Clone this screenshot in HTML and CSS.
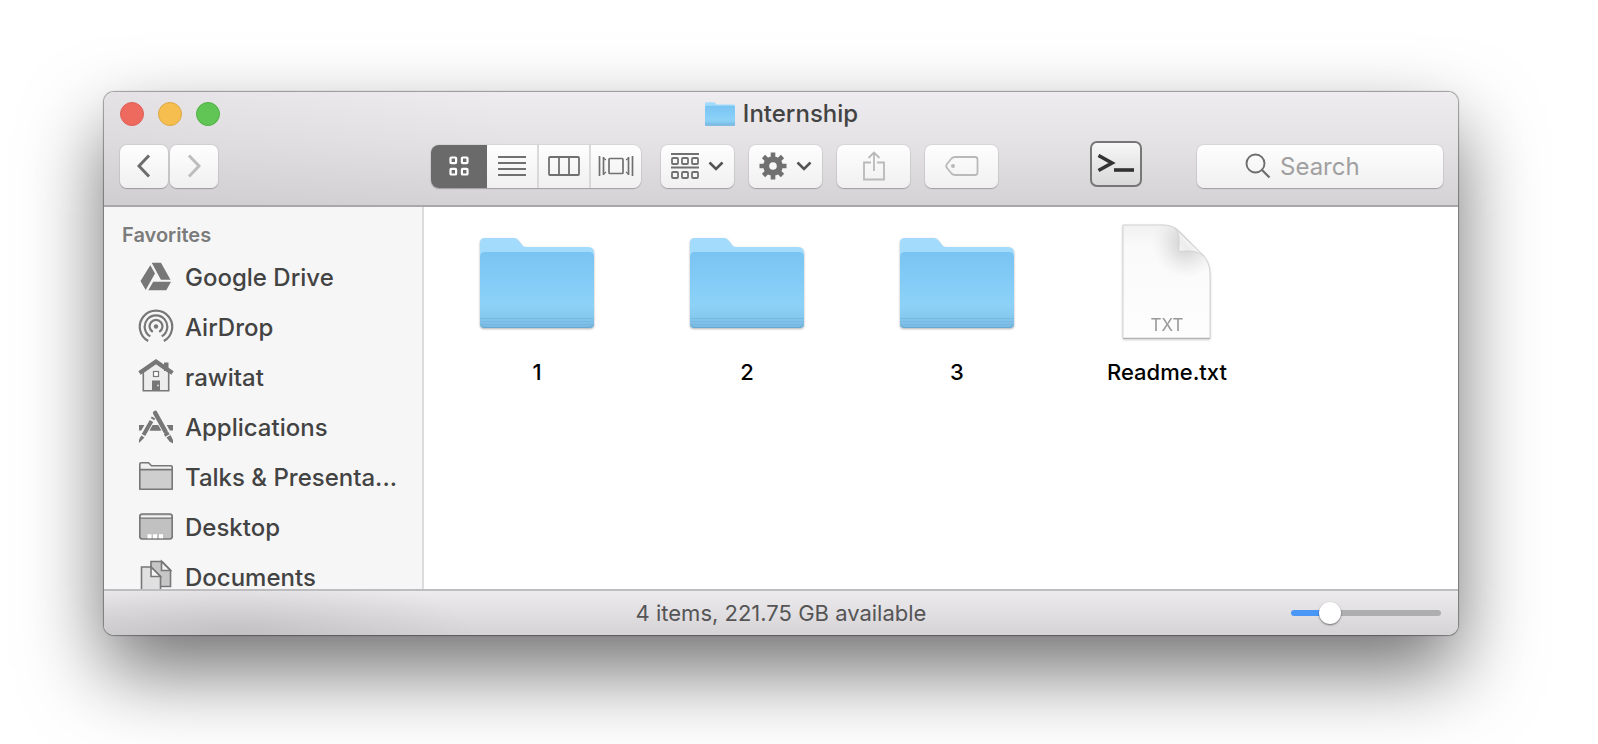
FILE: index.html
```html
<!DOCTYPE html>
<html lang="en">
<head>
<meta charset="utf-8">
<title>Internship</title>
<link rel="stylesheet" href="styles.css">
</head>
<body>
<svg class="defs" aria-hidden="true">
  <defs>
    <linearGradient id="front" x1="0" y1="0" x2="0" y2="1">
      <stop offset="0" stop-color="#7ac4f2"/><stop offset=".4" stop-color="#84ccf7"/><stop offset=".7" stop-color="#8dd2f6"/><stop offset=".85" stop-color="#86c9ef"/><stop offset="1" stop-color="#78b9e2"/>
    </linearGradient>
    <linearGradient id="paper" x1="0" y1="0" x2="0" y2="1">
      <stop offset="0" stop-color="#f1f1f1"/><stop offset=".2" stop-color="#fafafa"/><stop offset="1" stop-color="#fdfdfd"/>
    </linearGradient>
    <linearGradient id="curl" x1="0" y1="1" x2="1" y2="0">
      <stop offset="0" stop-color="#ffffff"/><stop offset=".35" stop-color="#ececec"/><stop offset=".7" stop-color="#ffffff"/>
    </linearGradient>
    <radialGradient id="shade" gradientUnits="userSpaceOnUse" cx="64" cy="20" r="34">
      <stop offset="0" stop-color="#bbb" stop-opacity=".75"/><stop offset=".5" stop-color="#ccc" stop-opacity=".4"/><stop offset="1" stop-color="#ddd" stop-opacity="0"/>
    </radialGradient>
    <symbol id="folder" viewBox="0 0 114 90">
      <path d="M0 88V5Q0 0 5 0H34Q37 0 39 3L42 7Q43 9 46 9H108Q114 9 114 15V88Z" fill="#a2dbfc"/>
      <path d="M0 19Q0 14 5 14H109Q114 14 114 19V86Q114 90 110 90H4Q0 90 0 86Z" fill="url(#front)"/>
      <path d="M0 80.500H114M0 83.500H114M0 86.500H114" stroke="#6fb2dc" stroke-opacity=".6"/>
      <path d="M1 87.500Q2 89.500 5 89.500H109Q112 89.500 113 87.500" fill="none" stroke="#68a8d0"/>
    </symbol>
  </defs>
</svg>
<main class="window">
  <header class="header">
    <div class="titlebar">
      <div class="lights">
        <button class="light close" aria-label="Close"></button>
        <button class="light minimize" aria-label="Minimize"></button>
        <button class="light expand" aria-label="Zoom"></button>
      </div>
      <h1 class="title"><svg class="title-icon" aria-hidden="true"><use href="#folder"/></svg>Internship</h1>
    </div>
    <div class="toolbar">
      <div class="nav">
        <button class="btn nav-btn" aria-label="Back"><svg width="14" height="24" viewBox="0 0 14 24"><path d="M12 1.500L2 12L12 22.500" fill="none" stroke="#6c6c6c" stroke-width="3"/></svg></button>
        <button class="btn nav-btn" aria-label="Forward" disabled><svg width="14" height="24" viewBox="0 0 14 24"><path d="M2 1.500L12 12L2 22.500" fill="none" stroke="#bdbdbd" stroke-width="3"/></svg></button>
      </div>
      <div class="views">
        <button class="view active" aria-label="Icons"><svg width="20" height="20" viewBox="0 0 20 20" fill="none" stroke="#fff" stroke-width="2.200"><rect x="1.500" y="1.500" width="5.600" height="5.600" rx=".8"/><rect x="12.900" y="1.500" width="5.600" height="5.600" rx=".8"/><rect x="1.500" y="12.900" width="5.600" height="5.600" rx=".8"/><rect x="12.900" y="12.900" width="5.600" height="5.600" rx=".8"/></svg></button>
        <button class="view" aria-label="List"><svg width="28" height="20" viewBox="0 0 28 20" stroke="#707070" stroke-width="1.800"><path d="M0 1H28M0 7H28M0 13H28M0 19H28"/></svg></button>
        <button class="view" aria-label="Columns"><svg width="32" height="20" viewBox="0 0 32 20" fill="none" stroke="#707070" stroke-width="1.800"><rect x="1" y="1" width="30" height="18" rx="1"/><path d="M11 1V19M21 1V19"/></svg></button>
        <button class="view" aria-label="Cover Flow"><svg width="36" height="20" viewBox="0 0 36 20" fill="none" stroke="#707070" stroke-width="1.700"><path d="M1.500 0V20M34.500 0V20M5.500 1V19M30.500 1V19"/><path d="M5.500 2L8 4M5.500 18L8 16M30.500 2L28 4M30.500 18L28 16" stroke-width="1.200"/><rect x="11" y="2.500" width="14" height="15" rx="1"/></svg></button>
      </div>
      <div class="actions">
        <button class="btn action" aria-label="Arrange"><svg width="28" height="28" viewBox="0 0 28 28" fill="none" stroke="#707070" stroke-width="1.800"><path d="M0 2H28M0 15.500H28"/><rect x="1" y="6" width="6" height="6" rx="1"/><rect x="11" y="6" width="6" height="6" rx="1"/><rect x="21" y="6" width="6" height="6" rx="1"/><rect x="1" y="20" width="6" height="6" rx="1"/><rect x="11" y="20" width="6" height="6" rx="1"/><rect x="21" y="20" width="6" height="6" rx="1"/></svg><svg width="16" height="10" viewBox="0 0 16 10"><path d="M1.500 1.500L8 8L14.500 1.500" fill="none" stroke="#545454" stroke-width="2.600"/></svg></button>
        <button class="btn action" aria-label="Action"><svg width="28" height="28" viewBox="0 0 28 28" fill="none" stroke="#707070"><circle cx="14" cy="14" r="6.800" stroke-width="6"/><path stroke-width="4.600" d="M14 .5V6M14 22V27.500M.5 14H6M22 14H27.500M4.500 4.500L8.500 8.500M19.500 19.500L23.500 23.500M4.500 23.500L8.500 19.500M19.500 8.500L23.500 4.500"/></svg><svg width="16" height="10" viewBox="0 0 16 10"><path d="M1.500 1.500L8 8L14.500 1.500" fill="none" stroke="#545454" stroke-width="2.600"/></svg></button>
        <button class="btn action" aria-label="Share" disabled><svg width="22" height="30" viewBox="0 0 22 30" fill="none" stroke="#b9b9b9" stroke-width="1.800"><path d="M8 11.500H1V28.500H21V11.500H14M11 20V1.500M5.500 7L11 1.500L16.500 7"/></svg></button>
        <button class="btn action" aria-label="Edit Tags" disabled><svg width="34" height="20" viewBox="0 0 34 20"><path d="M10 1H30Q32.500 1 32.500 3.500V16.500Q32.500 19 30 19H10Q8 19 6.500 17.500L2 12Q.5 10 2 8L6.500 2.500Q8 1 10 1Z" fill="none" stroke="#b9b9b9" stroke-width="1.800"/><circle cx="8" cy="10" r="2" fill="#b9b9b9"/></svg></button>
      </div>
      <button class="terminal" aria-label="Open in Terminal"><svg width="38" height="20" viewBox="0 0 38 20" fill="none" stroke="#333" stroke-width="3.600"><path d="M1.500 1.500L15 9L1.500 16.500"/><path d="M17 16H37"/></svg></button>
      <label class="search"><svg width="26" height="26" viewBox="0 0 26 26" fill="none" stroke="#6e6e6e" stroke-width="1.900"><circle cx="10.500" cy="10.500" r="9"/><path d="M17 17L24.500 24.500" stroke-width="2.300"/></svg><input class="search-input" type="search" placeholder="Search" aria-label="Search"></label>
    </div>
  </header>
  <div class="body">
    <nav class="sidebar">
      <h2 class="heading">Favorites</h2>
      <a class="place" href="#"><svg class="place-icon" viewBox="0 0 36 36" fill="#777"><path d="M13.700 3.700H23L32.500 20.700H22.900ZM12.300 6.300L17 14.500L7.700 31L2.500 22ZM15.200 22.700H33L28.300 31.300H10.300Z"/></svg><span class="place-name">Google Drive</span></a>
      <a class="place" href="#"><svg class="place-icon" viewBox="0 0 36 36" fill="none" stroke="#777" stroke-width="2.200"><path d="M10.200 32A16.200 16.200 0 1 1 25.800 32M12.300 27.400A11.300 11.300 0 1 1 23.700 27.400M14.800 22.900A6.400 6.400 0 1 1 21.200 22.900"/><circle cx="18" cy="17.500" r="2.200" fill="#777" stroke="none"/></svg><span class="place-name">AirDrop</span></a>
      <a class="place" href="#"><svg class="place-icon" viewBox="0 0 36 36"><path d="M5.300 13V31.800H30.700V13L18 4Z" fill="#ededed" stroke="#777" stroke-width="1.600"/><path d="M26 3.500H30.500V12H26Z" fill="#777"/><path d="M1.500 14L18 2.500L34.500 14" fill="none" stroke="#777" stroke-width="4"/><rect x="15.500" y="12.500" width="5" height="5" fill="#fff" stroke="#777" stroke-width="1.200"/><path d="M14 21.500H22V32H14Z" fill="#777"/><circle cx="20" cy="26.500" r=".9" fill="#ddd"/></svg><span class="place-name">rawitat</span></a>
      <a class="place" href="#"><svg class="place-icon" viewBox="0 0 36 36"><path d="M1 16H35V21.500H1Z" fill="#777"/><path d="M17 3L33 32M15 9L3 30" stroke="#f6f6f6" stroke-width="8"/><path d="M10 16H25V21.500H10Z" fill="#777"/><path d="M17.200 4L29 25" stroke="#f6f6f6" stroke-width="6.500"/><path d="M15.500 9L5 27.500" stroke="#f6f6f6" stroke-width="5.500"/><path d="M17.200 4L27.500 22.500" stroke="#777" stroke-width="4.600" stroke-linecap="round"/><path d="M28 24L29.500 26.500" stroke="#777" stroke-width="5"/><path d="M28.500 28.500L32.500 26L35 31V34.500L31.500 32.500Z" fill="#777"/><path d="M15.500 8.500L14.500 10.200M13.500 12L5.500 26" stroke="#777" stroke-width="4"/><path d="M3.300 26.500L6.500 28.500L1 34V30.500Z" fill="#777"/></svg><span class="place-name">Applications</span></a>
      <a class="place" href="#"><svg class="place-icon" viewBox="0 0 36 36" stroke="#777" stroke-width="1.600"><path d="M1.800 30V5Q1.800 3.800 3 3.800H10.500L13.500 6.800H33Q34.200 6.800 34.200 8V30Z" fill="#f0f0f0"/><path d="M1.800 10.600H34.200V29Q34.200 30.200 33 30.200H3Q1.800 30.200 1.800 29Z" fill="#cecece"/></svg><span class="place-name">Talks &amp; Presenta...</span></a>
      <a class="place" href="#"><svg class="place-icon" viewBox="0 0 36 36"><rect x="1.800" y="5" width="32.400" height="25" rx="2.500" fill="#c1c1c1" stroke="#777" stroke-width="1.600"/><path d="M3 6.500H33V8.500H3Z" fill="#f3f3f3"/><path d="M2 9.200H34" stroke="#777" stroke-width="1.200"/><path d="M9.500 25.200h4v4h-4zM15 25.200h4v4h-4zM21 25.200h4v4h-4z" fill="#fff"/></svg><span class="place-name">Desktop</span></a>
      <a class="place" href="#"><svg class="place-icon" viewBox="0 0 36 36" stroke="#777" stroke-width="1.600"><path d="M13 2.500H24L32.500 11V27.500H13Z" fill="#c6c6c6"/><path d="M23.500 2.500V11.500H32.500Z" fill="#f3f3f3"/><path d="M3.500 8H13L22.500 17.500V36H3.500Z" fill="#e0e0e0"/><path d="M13 8V17.500H22.500Z" fill="#f6f6f6"/></svg><span class="place-name">Documents</span></a>
    </nav>
    <section class="files" aria-label="Files">
      <figure class="file"><svg class="file-icon folder-icon" aria-hidden="true"><use href="#folder"/></svg><figcaption class="name">1</figcaption></figure>
      <figure class="file"><svg class="file-icon folder-icon" aria-hidden="true"><use href="#folder"/></svg><figcaption class="name">2</figcaption></figure>
      <figure class="file"><svg class="file-icon folder-icon" aria-hidden="true"><use href="#folder"/></svg><figcaption class="name">3</figcaption></figure>
      <figure class="file"><svg class="file-icon paper-icon" viewBox="0 0 90 116"><path d="M1 1H41Q51 1 58 8L80 30Q88 38 88 50V114H1Z" fill="url(#paper)"/><path d="M1 1H41Q51 1 58 8L80 30Q88 38 88 50V114H1Z" fill="url(#shade)" stroke="#d2d2d2"/><path d="M1 114.500H88" stroke="#b4b4b4"/><path d="M57 27.500V12Q56 6 52 3.500L82 32Q73 25 57 27.500Z" fill="url(#curl)" stroke="#d0d0d0" stroke-width=".8"/><text class="badge" x="45" y="107" text-anchor="middle">TXT</text></svg><figcaption class="name">Readme.txt</figcaption></figure>
    </section>
  </div>
  <footer class="status">
    <p class="summary">4 items, 221.75 GB available</p>
    <input class="size" type="range" min="0" max="100" value="22" aria-label="Icon size">
  </footer>
</main>
</body>
</html>
```
FILE: styles.css
```css
* {
  box-sizing: border-box;
}

body {
  display: flex;
  height: 100vh;
  margin: 0;
  padding: 92px 140px 109px 104px;
  overflow: hidden;
  background: #fff;
  color: #434343;
  font-family: Inter, "Liberation Sans", sans-serif;
  font-size: 24px;
}

button,
input {
  margin: 0;
  font: inherit;
}

button {
  display: flex;
  align-items: center;
  justify-content: center;
  padding: 0;
  border: 0;
}

.defs {
  position: absolute;
  width: 0;
  height: 0;
}

.window {
  display: flex;
  flex: 1;
  flex-direction: column;
  min-width: 0;
  border-radius: 10px;
  background: #fff;
  box-shadow: 0 0 1px 1px rgba(0, 0, 0, .35), 0 36px 80px rgba(0, 0, 0, .56);
}

.header {
  padding: 0 15px 17px 16px;
  border-bottom: 2px solid #a9a7aa;
  border-radius: 10px 10px 0 0;
  background: linear-gradient(90deg, rgba(190, 188, 190, .2), rgba(255, 255, 255, 0) 30%), linear-gradient(#eeecef, #e4e2e5 45%, #d4d2d5);
}

.titlebar {
  display: grid;
  grid-template-columns: 1fr auto 1fr;
  align-items: center;
  height: 44px;
}

.lights {
  display: flex;
  gap: 14px;
}

.light {
  width: 24px;
  height: 24px;
  border: 1px solid;
  border-radius: 50%;
}

.close {
  border-color: #dd5f57;
  background: #ee6a5e;
}

.minimize {
  border-color: #dca844;
  background: #f6be4f;
}

.expand {
  border-color: #52b046;
  background: #61c555;
}

.title {
  display: flex;
  align-items: center;
  gap: 8px;
  margin: 0;
  font-size: 24px;
  font-weight: 500;
  line-height: 32px;
}

.title-icon {
  width: 30px;
  height: 24px;
}

.toolbar {
  display: flex;
  align-items: center;
  height: 52px;
  margin-top: 4px;
  margin-bottom: -4px;
}

.btn,
.search {
  height: 43px;
  border-radius: 7px;
  background: linear-gradient(#fefefe, #f0f0f0);
  box-shadow: 0 0 1px 1px rgba(0, 0, 0, .06), 0 1px 1px rgba(0, 0, 0, .22);
}

.nav {
  display: flex;
  gap: 2px;
  margin-right: 213px;
}

.nav-btn {
  width: 48px;
}

.views {
  display: flex;
  gap: 2px;
  margin-right: 20px;
  overflow: hidden;
  border-radius: 8px;
  background: #d9d9d9;
  box-shadow: 0 0 1px 1px rgba(0, 0, 0, .06), 0 1px 1px rgba(0, 0, 0, .22);
}

.view {
  width: 50px;
  height: 43px;
  background: linear-gradient(#fefefe, #f0f0f0);
}

.view.active {
  width: 56px;
  margin-right: -2px;
  background: #6a6a6a;
}

.actions {
  display: flex;
  gap: 15px;
}

.action {
  gap: 9px;
  width: 73px;
}

.terminal {
  width: 52px;
  height: 46px;
  margin-bottom: 4px;
  margin-left: 92px;
  border: 2px solid #777;
  border-radius: 7px;
  background: linear-gradient(#f7f7f7, #d9d9d9);
}

.search {
  display: flex;
  align-items: center;
  gap: 9px;
  width: 246px;
  margin-left: auto;
  padding-left: 48px;
}

.search-input {
  flex: 1;
  width: 0;
  min-width: 0;
  padding: 0;
  border: 0;
  outline: 0;
  background: transparent;
}

.search-input::placeholder {
  color: #a0a0a0;
  opacity: 1;
}

.body {
  display: flex;
  flex: 1;
  min-height: 0;
}

.sidebar {
  width: 320px;
  padding: 11px 16px 0 18px;
  overflow: hidden;
  border-right: 2px solid #dcdcdc;
  background: #f6f6f6;
}

.heading {
  margin: 0;
  color: #7b7b7b;
  font-size: 20px;
  font-weight: 600;
  line-height: 34px;
}

.place {
  display: flex;
  align-items: center;
  gap: 11px;
  height: 50px;
  padding-left: 16px;
  color: inherit;
  font-weight: 500;
  text-decoration: none;
}

.place-icon {
  flex: none;
  width: 36px;
  height: 36px;
}

.place-name {
  white-space: nowrap;
}

.files {
  display: grid;
  flex: 1;
  grid-template-columns: repeat(auto-fill, 210px);
  align-content: start;
  padding: 17px 8px;
}

.file {
  display: flex;
  flex-direction: column;
  align-items: center;
  margin: 0;
}

.file-icon {
  height: 116px;
}

.folder-icon {
  width: 114px;
  height: 90px;
  margin: 14px 0 12px;
  filter: drop-shadow(0 1px 1px rgba(0, 0, 0, .3));
}

.paper-icon {
  width: 90px;
  filter: drop-shadow(0 1px 1px rgba(0, 0, 0, .2));
}

.badge {
  fill: #999;
  font-size: 17px;
}

.name {
  margin-top: 17px;
  color: #000;
  font-size: 22px;
  font-weight: 500;
  line-height: 30px;
}

.status {
  display: grid;
  grid-template-columns: 1fr auto 1fr;
  align-items: center;
  height: 46px;
  padding: 0 17px;
  border-top: 2px solid #bdbcbe;
  border-radius: 0 0 10px 10px;
  background: radial-gradient(ellipse 240px 60px at 130px 40px, rgba(150, 148, 150, .3), rgba(190, 188, 190, 0)), linear-gradient(#edebee, #d5d3d6);
}

.summary {
  grid-column: 2;
  margin: 0;
  color: #555;
  font-size: 22px;
  line-height: 30px;
}

.size {
  justify-self: end;
  width: 150px;
  height: 22px;
  appearance: none;
  background: transparent;
}

.size::-webkit-slider-runnable-track {
  height: 6px;
  border-radius: 3px;
  background: linear-gradient(90deg, #4b97f7 24%, #aeadaf 24%);
}

.size::-webkit-slider-thumb {
  width: 22px;
  height: 22px;
  margin-top: -8px;
  border-radius: 50%;
  appearance: none;
  background: #fff;
  box-shadow: 0 1px 2px rgba(0, 0, 0, .5);
}
```
